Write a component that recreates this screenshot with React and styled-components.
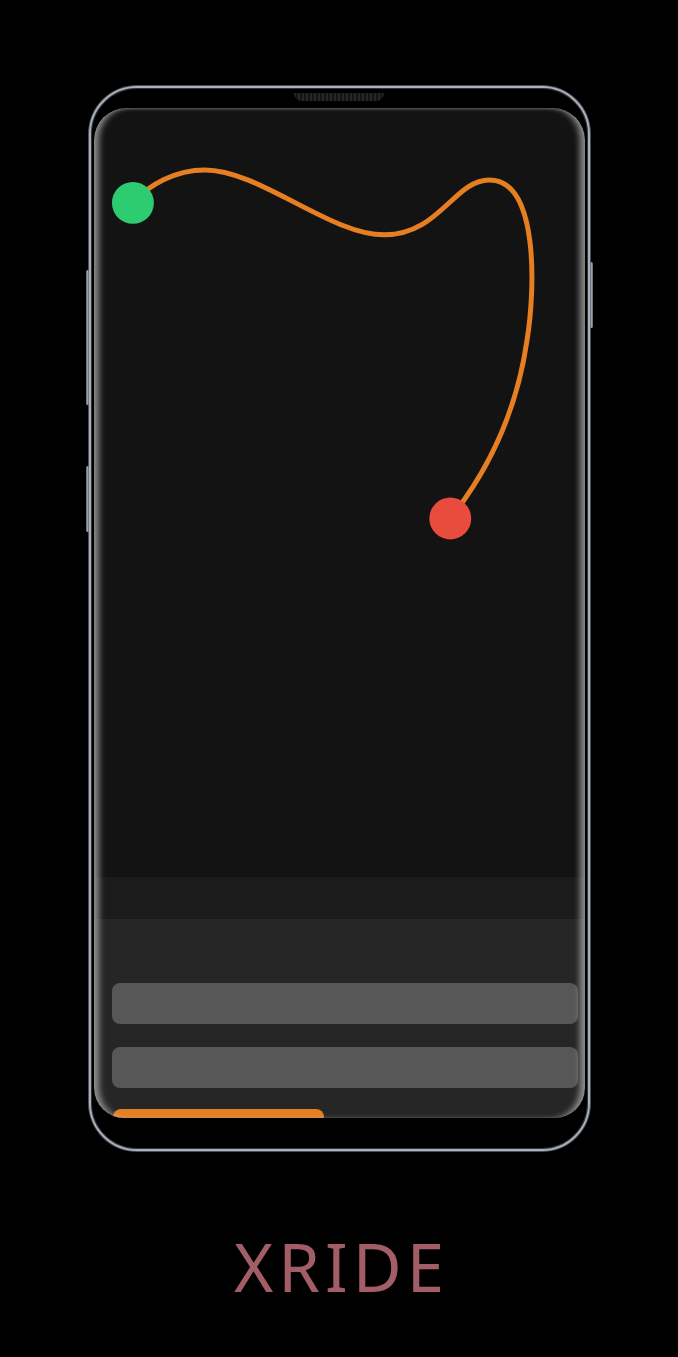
import React from 'react';
import styled, { createGlobalStyle } from 'styled-components';

const GlobalStyle = createGlobalStyle`
  html, body {
    margin: 0;
    padding: 0;
    background: #000;
  }
  body {
    font-family: "Noto Sans", "Liberation Sans", sans-serif;
  }
`;

const Page = styled.div`
  width: 678px;
  min-height: 1357px;
  background: #000;
  display: flex;
  flex-direction: column;
  align-items: center;
  padding-top: 86px;
  box-sizing: border-box;
`;

const Phone = styled.div`
  position: relative;
  width: 501px;
  height: 1065px;
  box-sizing: border-box;
  border: 2px solid #a9b0b9;
  border-radius: 48px;
  background: #000;
  box-shadow: inset 0 0 0 1px #30343a, 0 0 0 1px #4b5058;
  padding: 20px 3px 31px 3px;
  display: flex;
`;

const SideButton = styled.div`
  position: absolute;
  width: 3px;
  top: ${props => props.top}px;
  height: ${props => props.h}px;
  ${props => (props.right ? 'right: -5px;' : 'left: -5px;')}
  border-radius: 2px;
  background: linear-gradient(90deg, #5d636b, #9aa1aa, #5d636b);
`;

const Notch = styled.div`
  position: absolute;
  top: 5px;
  left: 50%;
  transform: translateX(-50%);
  width: 90px;
  height: 8px;
  border-radius: 0 0 8px 8px;
  background: repeating-linear-gradient(90deg, #262626 0 2px, #141414 2px 4px);
`;

const Screen = styled.div`
  position: relative;
  flex: 1;
  display: flex;
  flex-direction: column;
  border-radius: 32px 32px 30px 30px;
  overflow: hidden;
  background: #131313;

  &::after {
    content: '';
    position: absolute;
    inset: 0;
    border-radius: inherit;
    pointer-events: none;
    box-shadow:
      inset 8px 0 6px -3px rgba(190, 190, 190, 0.7),
      inset -8px 0 6px -3px rgba(190, 190, 190, 0.7),
      inset 0 2px 3px -1px rgba(140, 140, 140, 0.4);
  }
`;

const MapArea = styled.div`
  flex: 1;
  position: relative;
`;

const RouteSvg = styled.svg`
  display: block;
  width: 100%;
  height: 100%;
`;

const Sheet = styled.div`
  display: flex;
  flex-direction: column;
`;

const SheetHandle = styled.div`
  height: 42px;
  background: #1b1b1b;
`;

const SheetBody = styled.div`
  background: #262626;
  display: flex;
  flex-direction: column;
  gap: 23px;
  padding: 64px 7px 0 18px;
`;

const Field = styled.div`
  height: 41px;
  border-radius: 8px;
  background: #575757;
`;

const Progress = styled.div`
  width: 211px;
  height: 9px;
  margin-top: -2px;
  margin-left: 1px;
  border-radius: 8px 8px 0 0;
  background: #e67e22;
`;

const Brand = styled.div`
  margin-top: 82px;
  font-family: "Noto Sans", "Liberation Sans", sans-serif;
  font-size: 67px;
  font-weight: 400;
  letter-spacing: 5px;
  line-height: 1;
  color: #a35d67;
  padding-left: 5px;
`;

const Route = () => (
  <RouteSvg viewBox="0 0 492 770" preserveAspectRatio="none">
    <g transform="translate(-94 -108)">
      <path
        d="M133 202 C150 185 175 170 205 170 C260 170 330 235 385 235 C440 235 455 180 490 180 C540 180 536 290 528 340 C518 410 490 470 451 519"
        fill="none"
        stroke="#e67e22"
        strokeWidth="5"
        strokeLinecap="round"
      />
      <circle cx="133" cy="203" r="21" fill="#2ecc71" />
      <circle cx="451" cy="519" r="21" fill="#e74c3c" />
    </g>
  </RouteSvg>
);

export default function App() {
  return (
    <>
      <GlobalStyle />
      <Page>
        <Phone>
          <SideButton top={182} h={135} />
          <SideButton top={378} h={66} />
          <SideButton right top={174} h={66} />
          <Notch />
          <Screen>
            <MapArea>
              <Route />
            </MapArea>
            <Sheet>
              <SheetHandle />
              <SheetBody>
                <Field />
                <Field />
                <Progress />
              </SheetBody>
            </Sheet>
          </Screen>
        </Phone>
        <Brand>XRIDE</Brand>
      </Page>
    </>
  );
}
